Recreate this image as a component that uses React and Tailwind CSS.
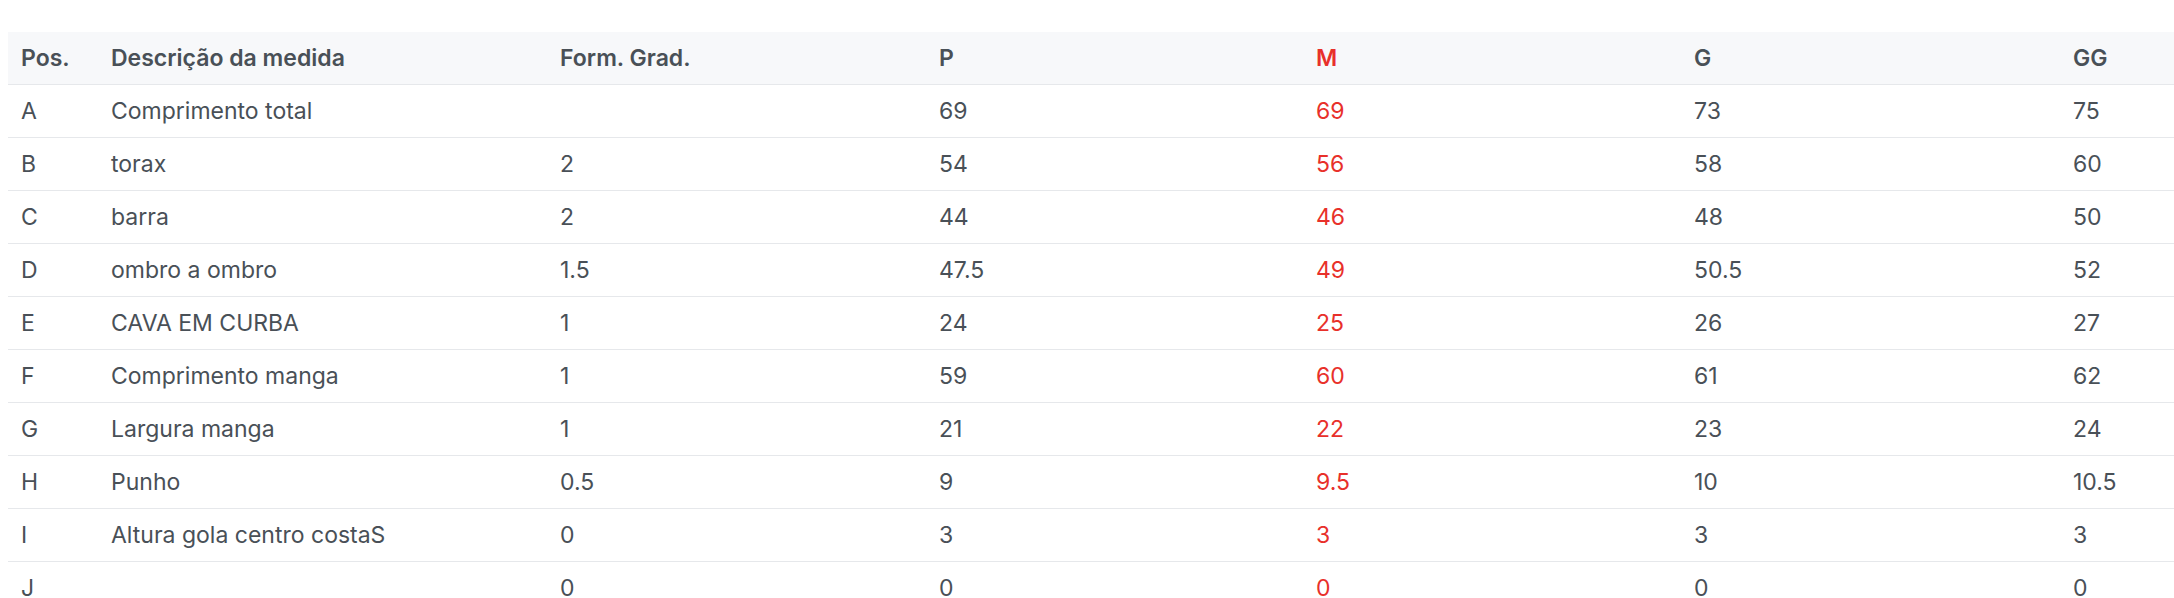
import React from 'react';

// size chart — "M" is the base size, highlighted in red
const sizes = ['P', 'M', 'G', 'GG'];

const rows = [
  ['A', 'Comprimento total', '', '69', '69', '73', '75'],
  ['B', 'torax', '2', '54', '56', '58', '60'],
  ['C', 'barra', '2', '44', '46', '48', '50'],
  ['D', 'ombro a ombro', '1.5', '47.5', '49', '50.5', '52'],
  ['E', 'CAVA EM CURBA', '1', '24', '25', '26', '27'],
  ['F', 'Comprimento manga', '1', '59', '60', '61', '62'],
  ['G', 'Largura manga', '1', '21', '22', '23', '24'],
  ['H', 'Punho', '0.5', '9', '9.5', '10', '10.5'],
  ['I', 'Altura gola centro costaS', '0', '3', '3', '3', '3'],
  ['J', '', '0', '0', '0', '0', '0'],
];

const cols = 'grid grid-cols-[90px_449px_379px_377px_378px_379px_378px]';

function Cell({ children, red }) {
  return (
    <div className={`pl-[13px] flex items-center h-[52px] whitespace-nowrap ${red ? 'text-[#e8302a]' : ''}`}>
      {children}
    </div>
  );
}

export default function App() {
  return (
    <div
      className="bg-white w-full h-[598px] overflow-hidden pt-[32px] pl-[8px] text-[#495057] text-[23px] leading-[18px]"
      style={{ fontFamily: 'Inter, "Liberation Sans", sans-serif' }}
    >
      <div className="w-[2430px]">
        {/* header */}
        <div className={`${cols} bg-[#f7f8fa] font-semibold`}>
          <Cell>Pos.</Cell>
          <Cell>Descrição da medida</Cell>
          <Cell>Form. Grad.</Cell>
          {sizes.map((s) => (
            <Cell key={s} red={s === 'M'}>{s}</Cell>
          ))}
        </div>

        {/* body */}
        {rows.map((r) => (
          <div key={r[0]} className={`${cols} border-t border-[#e6e8eb]`}>
            {r.map((v, i) => (
              <Cell key={i} red={i === 4}>{v}</Cell>
            ))}
          </div>
        ))}
      </div>
    </div>
  );
}
